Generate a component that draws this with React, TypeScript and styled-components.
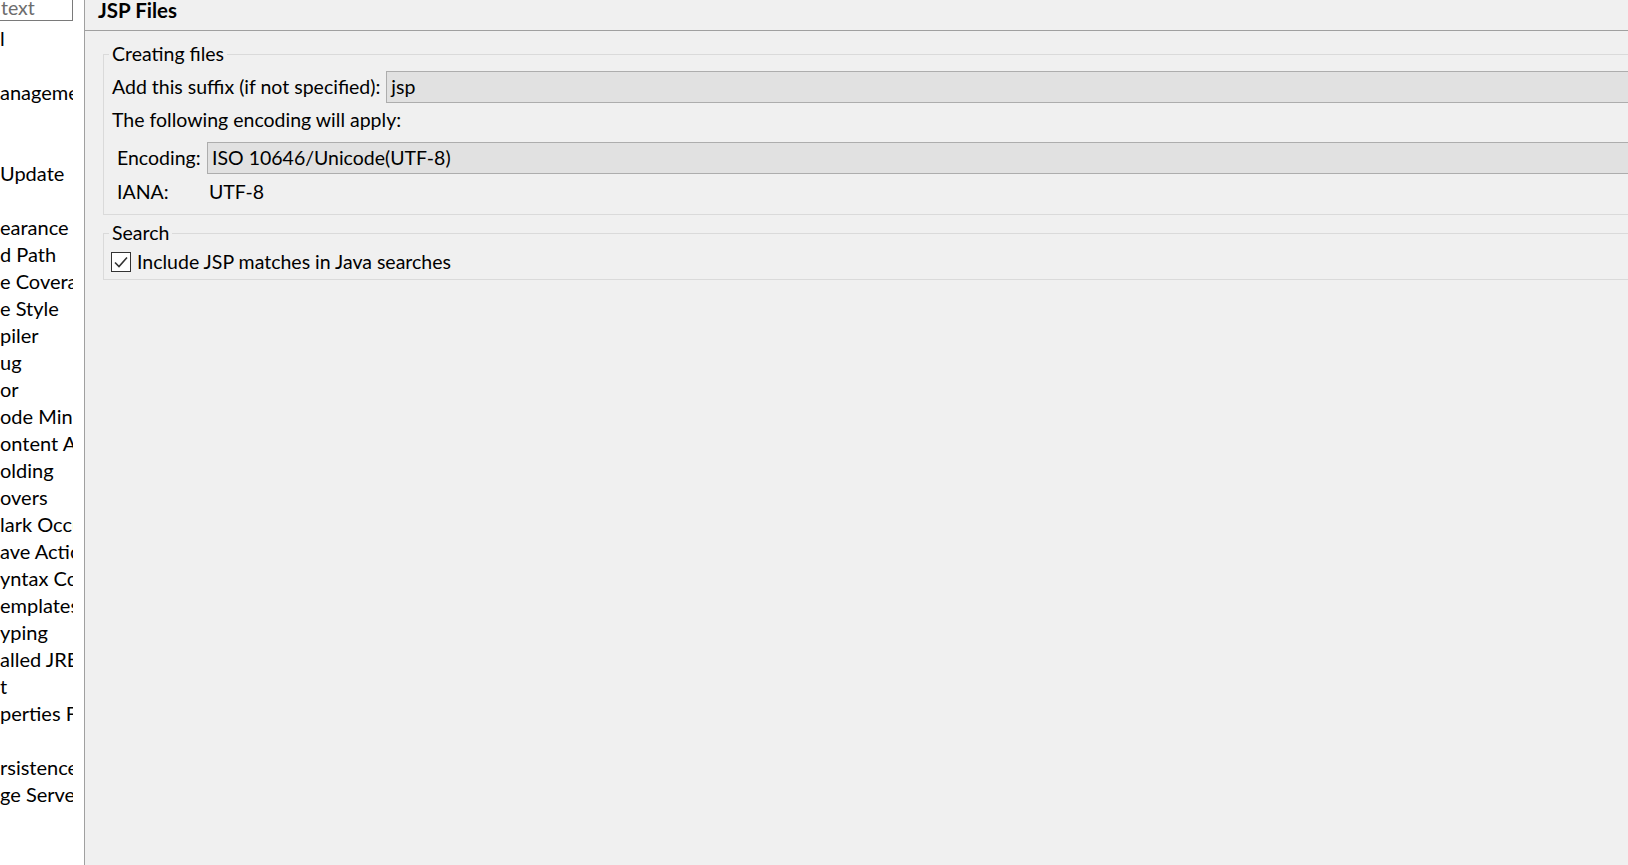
import styled, { createGlobalStyle } from "styled-components";

const GlobalStyle = createGlobalStyle`
  html, body {
    margin: 0;
    padding: 0;
    height: 100%;
    overflow: hidden;
  }
  body {
    font-family: "Lato", "Noto Sans", sans-serif;
    font-size: 19.5px;
    color: #000;
    background: #f0f0f0;
  }
`;

const Window = styled.div`
  display: flex;
  width: 1628px;
  height: 865px;
  overflow: hidden;
`;

const Sidebar = styled.aside`
  flex: none;
  width: 84px;
  background: #fff;
  border-right: 1px solid #a0a0a0;
  overflow: hidden;
`;

const FilterBox = styled.div`
  box-sizing: border-box;
  width: 84px;
  height: 27px;
  margin: -6px 0 0 -11px;
  padding-left: 11px;
  border: 1px solid #7a7a7a;
  color: #6d6d6d;
  line-height: 25px;
  white-space: nowrap;
  overflow: hidden;
`;

const Tree = styled.ul`
  list-style: none;
  margin: 4px 0 0 0;
  padding: 0;
  width: 73px;
  overflow: hidden;
  font-size: 20px;
`;

const TreeRow = styled.li`
  height: 27px;
  line-height: 27px;
  white-space: nowrap;
`;

const Main = styled.main`
  flex: 1;
  min-width: 0;
  overflow: hidden;
  display: flex;
  flex-direction: column;
`;

const TitleBar = styled.div`
  height: 30px;
  border-bottom: 1px solid #a0a0a0;
  padding-left: 13px;
  font-weight: 700;
  font-size: 20.5px;
  line-height: 20px;
`;

const Body = styled.div`
  padding: 11px 0 0 18px;
  margin-right: -40px;
`;

const Group = styled.fieldset<{ $gap?: number; $bottom?: number }>`
  margin: 0 0 ${(p) => p.$gap ?? 0}px 0;
  padding: 5px 0 ${(p) => p.$bottom ?? 5}px 8px;
  border: 1px solid #dadada;
  min-width: 0;
`;

const Legend = styled.legend`
  padding: 0 3px;
  margin-left: -3px;
  line-height: 24px;
`;

const FieldRow = styled.div`
  display: flex;
  align-items: center;
  gap: 6px;
  line-height: 24px;
`;

const Note = styled.div`
  line-height: 24px;
  margin: 5px 0 10px;
`;

const EncodingGrid = styled.div`
  display: grid;
  grid-template-columns: 90px 1fr;
  row-gap: 6px;
  align-items: center;
  padding-left: 5px;
  line-height: 24px;
`;

const ReadOnlyField = styled.div`
  flex: 1;
  box-sizing: border-box;
  height: 32px;
  padding: 0 4px;
  background: #e1e1e1;
  border: 1px solid #adadad;
  line-height: 30px;
  white-space: nowrap;
`;

const Value = styled.span`
  padding-left: 2px;
`;

const CheckRow = styled.label`
  display: flex;
  align-items: center;
  gap: 6px;
  line-height: 24px;
`;

const CheckBox = styled.span`
  box-sizing: border-box;
  width: 20px;
  height: 20px;
  margin-left: -1px;
  border: 1px solid #333;
  background: #fff;
  display: flex;
  align-items: center;
  justify-content: center;
`;

const treeItems = [
  "l",
  "",
  "anagement",
  "",
  "",
  "Update",
  "",
  "earance",
  "d Path",
  "e Coverage",
  "e Style",
  "piler",
  "ug",
  "or",
  "ode Minings",
  "ontent Assist",
  "olding",
  "overs",
  "lark Occurrences",
  "ave Actions",
  "yntax Coloring",
  "emplates",
  "yping",
  "alled JREs",
  "t",
  "perties Files Editor",
  "",
  "rsistence",
  "ge Servers",
];

export default function App() {
  return (
    <>
      <GlobalStyle />
      <Window>
        <Sidebar>
          <FilterBox>text</FilterBox>
          <Tree>
            {treeItems.map((item, i) => (
              <TreeRow key={i}>{item}</TreeRow>
            ))}
          </Tree>
        </Sidebar>
        <Main>
          <TitleBar>JSP Files</TitleBar>
          <Body>
            <Group $gap={6} $bottom={10}>
              <Legend>Creating files</Legend>
              <FieldRow>
                <span>Add this suffix (if not specified):</span>
                <ReadOnlyField>jsp</ReadOnlyField>
              </FieldRow>
              <Note>The following encoding will apply:</Note>
              <EncodingGrid>
                <span>Encoding:</span>
                <ReadOnlyField>ISO 10646/Unicode(UTF-8)</ReadOnlyField>
                <span>IANA:</span>
                <Value>UTF-8</Value>
              </EncodingGrid>
            </Group>
            <Group>
              <Legend>Search</Legend>
              <CheckRow>
                <CheckBox>
                  <svg width="14" height="12" viewBox="0 0 14 12">
                    <path d="M1 6.5 L5 10.5 L13 1.5" fill="none" stroke="#333" strokeWidth="1.6" />
                  </svg>
                </CheckBox>
                <span>Include JSP matches in Java searches</span>
              </CheckRow>
            </Group>
          </Body>
        </Main>
      </Window>
    </>
  );
}
